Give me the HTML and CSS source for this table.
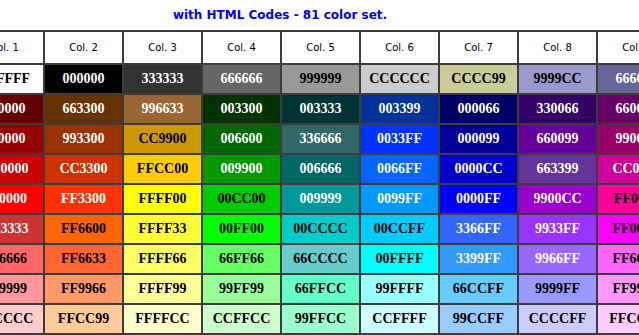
FILE: index.html
```html
<!DOCTYPE html>
<html>
<head>
<meta charset="utf-8">
<link rel="stylesheet" href="styles.css">
</head>
<body>
<div class="page">
  <p class="title">with HTML Codes - 81 color set.</p>
  <table class="chart">
    <thead>
      <tr><th>Col. 1</th><th>Col. 2</th><th>Col. 3</th><th>Col. 4</th><th>Col. 5</th><th>Col. 6</th><th>Col. 7</th><th>Col. 8</th><th>Col. 9</th></tr>
    </thead>
    <tbody>
      <tr>
        <td style="background:#FFFFFF">FFFFFF</td><td class="w" style="background:#000000">000000</td><td class="w" style="background:#333333">333333</td><td class="w" style="background:#666666">666666</td><td style="background:#999999">999999</td><td style="background:#CCCCCC">CCCCCC</td><td style="background:#CCCC99">CCCC99</td><td style="background:#9999CC">9999CC</td><td class="w" style="background:#666699">666699</td>
      </tr>
      <tr>
        <td class="w" style="background:#660000">660000</td><td class="w" style="background:#663300">663300</td><td class="w" style="background:#996633">996633</td><td class="w" style="background:#003300">003300</td><td class="w" style="background:#003333">003333</td><td class="w" style="background:#003399">003399</td><td class="w" style="background:#000066">000066</td><td class="w" style="background:#330066">330066</td><td class="w" style="background:#660066">660066</td>
      </tr>
      <tr>
        <td class="w" style="background:#990000">990000</td><td class="w" style="background:#993300">993300</td><td style="background:#CC9900">CC9900</td><td class="w" style="background:#006600">006600</td><td class="w" style="background:#336666">336666</td><td class="w" style="background:#0033FF">0033FF</td><td class="w" style="background:#000099">000099</td><td class="w" style="background:#660099">660099</td><td class="w" style="background:#990066">990066</td>
      </tr>
      <tr>
        <td class="w" style="background:#CC0000">CC0000</td><td class="w" style="background:#CC3300">CC3300</td><td style="background:#FFCC00">FFCC00</td><td class="w" style="background:#009900">009900</td><td class="w" style="background:#006666">006666</td><td class="w" style="background:#0066FF">0066FF</td><td class="w" style="background:#0000CC">0000CC</td><td class="w" style="background:#663399">663399</td><td class="w" style="background:#CC0099">CC0099</td>
      </tr>
      <tr>
        <td class="w" style="background:#FF0000">FF0000</td><td class="w" style="background:#FF3300">FF3300</td><td style="background:#FFFF00">FFFF00</td><td style="background:#00CC00">00CC00</td><td class="w" style="background:#009999">009999</td><td class="w" style="background:#0099FF">0099FF</td><td class="w" style="background:#0000FF">0000FF</td><td class="w" style="background:#9900CC">9900CC</td><td style="background:#FF0099">FF0099</td>
      </tr>
      <tr>
        <td class="w" style="background:#CC3333">CC3333</td><td style="background:#FF6600">FF6600</td><td style="background:#FFFF33">FFFF33</td><td style="background:#00FF00">00FF00</td><td style="background:#00CCCC">00CCCC</td><td style="background:#00CCFF">00CCFF</td><td class="w" style="background:#3366FF">3366FF</td><td class="w" style="background:#9933FF">9933FF</td><td style="background:#FF00FF">FF00FF</td>
      </tr>
      <tr>
        <td style="background:#FF6666">FF6666</td><td style="background:#FF6633">FF6633</td><td style="background:#FFFF66">FFFF66</td><td style="background:#66FF66">66FF66</td><td style="background:#66CCCC">66CCCC</td><td style="background:#00FFFF">00FFFF</td><td class="w" style="background:#3399FF">3399FF</td><td class="w" style="background:#9966FF">9966FF</td><td style="background:#FF66FF">FF66FF</td>
      </tr>
      <tr>
        <td style="background:#FF9999">FF9999</td><td style="background:#FF9966">FF9966</td><td style="background:#FFFF99">FFFF99</td><td style="background:#99FF99">99FF99</td><td style="background:#66FFCC">66FFCC</td><td style="background:#99FFFF">99FFFF</td><td style="background:#66CCFF">66CCFF</td><td style="background:#9999FF">9999FF</td><td style="background:#FF99FF">FF99FF</td>
      </tr>
      <tr>
        <td style="background:#FFCCCC">FFCCCC</td><td style="background:#FFCC99">FFCC99</td><td style="background:#FFFFCC">FFFFCC</td><td style="background:#CCFFCC">CCFFCC</td><td style="background:#99FFCC">99FFCC</td><td style="background:#CCFFFF">CCFFFF</td><td style="background:#99CCFF">99CCFF</td><td style="background:#CCCCFF">CCCCFF</td><td style="background:#FFCCFF">FFCCFF</td>
      </tr>
    </tbody>
  </table>
</div>
</body>
</html>
```
FILE: styles.css
```css
html, body {
  margin: 0;
  padding: 0;
  background: #ffffff;
  overflow: hidden;
}

.page {
  width: 639px;
  height: 335px;
  overflow: hidden;
}

.title {
  margin: 0;
  width: 560px;
  padding-top: 8px;
  padding-bottom: 8px;
  text-align: center;
  font-family: "DejaVu Sans", Verdana, sans-serif;
  font-weight: bold;
  font-size: 12px;
  line-height: 14px;
  color: #0000ff;
}

.chart {
  margin-left: -36px;
  width: 713px;
  table-layout: fixed;
  border-collapse: separate;
  border-spacing: 0;
  border: 1px solid #3c3c3c;
}

.chart th {
  border: 1px solid #3c3c3c;
  padding: 0;
  background: #ffffff;
  font-family: "DejaVu Sans", Verdana, sans-serif;
  font-weight: normal;
  font-size: 10px;
  line-height: 31px;
  color: #000000;
  text-align: center;
  white-space: nowrap;
}

.chart td {
  border: 1px solid #3c3c3c;
  padding: 0;
  font-family: "Liberation Serif", "Times New Roman", serif;
  font-weight: bold;
  font-size: 14px;
  line-height: 28px;
  color: #000000;
  text-align: center;
  white-space: nowrap;
}

.chart td.w {
  color: #ffffff;
}
```
